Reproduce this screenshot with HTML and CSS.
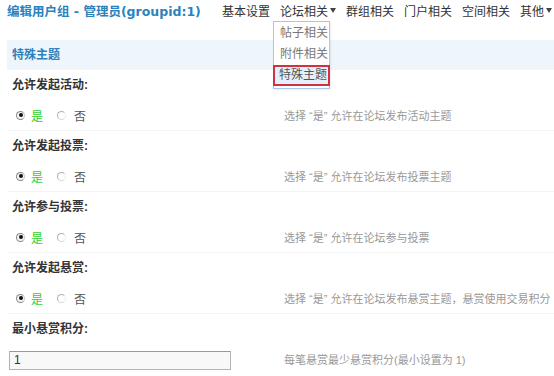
FILE: index.html
```html
<!DOCTYPE html>
<html lang="zh-CN">
<head>
<meta charset="utf-8">
<title>编辑用户组</title>
<link rel="stylesheet" href="styles.css">
</head>
<body>
<div class="page">
  <header class="topbar">
    <h1 class="title">编辑用户组 - 管理员(groupid:1)</h1>
    <nav class="nav">
      <span class="nav-item">基本设置</span>
      <span class="nav-item has-menu">论坛相关<span class="caret"></span>
        <ul class="menu">
          <li class="menu-item">帖子相关</li>
          <li class="menu-item">附件相关</li>
          <li class="menu-item active">特殊主题</li>
        </ul>
      </span>
      <span class="nav-item">群组相关</span>
      <span class="nav-item">门户相关</span>
      <span class="nav-item">空间相关</span>
      <span class="nav-item">其他<span class="caret"></span></span>
    </nav>
  </header>

  <div class="section-title">特殊主题</div>

  <div class="form">
    <div class="group">
      <div class="label-row">允许发起活动:</div>
      <div class="control-row">
        <div class="control"><span class="radio checked"></span><span class="yes">是</span><span class="radio"></span><span class="no">否</span></div>
        <div class="desc">选择 “是” 允许在论坛发布活动主题</div>
      </div>
    </div>
    <div class="group">
      <div class="label-row">允许发起投票:</div>
      <div class="control-row">
        <div class="control"><span class="radio checked"></span><span class="yes">是</span><span class="radio"></span><span class="no">否</span></div>
        <div class="desc">选择 “是” 允许在论坛发布投票主题</div>
      </div>
    </div>
    <div class="group">
      <div class="label-row">允许参与投票:</div>
      <div class="control-row">
        <div class="control"><span class="radio checked"></span><span class="yes">是</span><span class="radio"></span><span class="no">否</span></div>
        <div class="desc">选择 “是” 允许在论坛参与投票</div>
      </div>
    </div>
    <div class="group">
      <div class="label-row">允许发起悬赏:</div>
      <div class="control-row">
        <div class="control"><span class="radio checked"></span><span class="yes">是</span><span class="radio"></span><span class="no">否</span></div>
        <div class="desc">选择 “是” 允许在论坛发布悬赏主题，悬赏使用交易积分</div>
      </div>
    </div>
    <div class="group last">
      <div class="label-row">最小悬赏积分:</div>
      <div class="control-row">
        <div class="control"><span class="text-input">1</span></div>
        <div class="desc">每笔悬赏最少悬赏积分(最小设置为 1)</div>
      </div>
    </div>
  </div>
</div>
</body>
</html>
```

FILE: styles.css
```css
* { box-sizing: border-box; }
html, body { margin: 0; padding: 0; background: #fff; }
body {
  font-family: "Liberation Sans", "Noto Sans CJK SC", sans-serif;
  font-size: 12px;
  color: #333;
}
.page { width: 554px; }

.topbar {
  height: 20px;
  display: flex;
  align-items: center;
  padding: 0 0 0 7px;
  margin-bottom: 20px;
}
.title {
  flex: 0 0 215px;
  margin: 0;
  font-family: "DejaVu Sans", "Noto Sans CJK SC", sans-serif;
  font-size: 12.5px;
  font-weight: bold;
  color: #2b82bd;
  white-space: nowrap;
}
.nav {
  display: flex;
  gap: 10px;
  align-items: center;
}
.nav-item {
  position: relative;
  display: inline-flex;
  align-items: center;
  color: #333;
  white-space: nowrap;
  font-size: 12px;
}
.caret {
  display: inline-block;
  width: 0;
  height: 0;
  margin-left: 2px;
  margin-top: 1px;
  border-left: 3px solid transparent;
  border-right: 3px solid transparent;
  border-top: 5px solid #444;
}
.menu {
  position: absolute;
  left: -7px;
  top: 19px;
  width: 57px;
  margin: 0;
  padding: 1px 0 2px;
  list-style: none;
  background: #fff;
  border: 1px solid #aac8e6;
  box-shadow: 1px 1px 2px rgba(0,0,0,0.08);
  z-index: 5;
}
.menu-item {
  height: 21px;
  line-height: 21px;
  padding-left: 6px;
  color: #777;
  font-size: 12px;
}
.menu-item.active {
  border: 2px solid #cf3340;
  background: #e5eff9;
  color: #555;
  line-height: 17px;
  padding-left: 4px;
  margin: 0 -1px;
}

.section-title {
  margin-left: 7px;
  height: 30px;
  line-height: 30px;
  padding-left: 5px;
  background: #eef5fb;
  color: #2b82bd;
  font-weight: bold;
  font-size: 12px;
}

.form { margin-left: 7px; }
.group { border-bottom: 1px solid #f3f3f3; }
.group.last { border-bottom: none; }
.label-row {
  height: 30px;
  line-height: 30px;
  padding-left: 5px;
  font-weight: bold;
  color: #333;
}
.control-row {
  height: 30px;
  display: grid;
  grid-template-columns: 277px 1fr;
  align-items: center;
}
.control {
  display: flex;
  align-items: center;
  padding-left: 9px;
}
.radio {
  width: 9px;
  height: 9px;
  border-radius: 50%;
  border: 1px solid #b0b0b0;
  border-right-color: #ececec;
  border-bottom-color: #d8d8d8;
  background: #fff;
  display: inline-flex;
  align-items: center;
  justify-content: center;
}
.radio.checked {
  border-color: #8a8a8a;
  border-right-color: #c8c8c8;
  background: #f4f4f4;
}
.radio.checked::after {
  content: "";
  width: 4px;
  height: 4px;
  border-radius: 50%;
  background: #111;
}
.yes { color: #2fd02f; margin: 0 14px 0 6px; }
.no { color: #555; margin-left: 8px; }

.text-input {
  display: block;
  width: 222px;
  height: 19px;
  line-height: 17px;
  margin-left: -7px;
  margin-top: 2px;
  padding-left: 4px;
  border: 1px solid #b5b5b5;
  border-top-color: #9a9a9a;
  background: #f8f8f8;
  color: #333;
  font-size: 12px;
}

.desc {
  color: #999;
  font-size: 11px;
  white-space: nowrap;
}
```
